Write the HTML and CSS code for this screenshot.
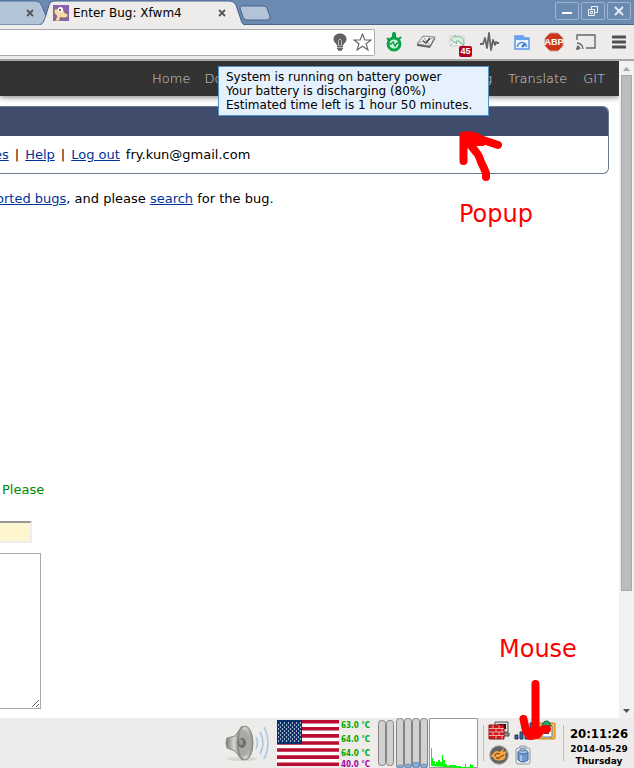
FILE: index.html
```html
<!DOCTYPE html>
<html lang="en">
<head>
<meta charset="utf-8">
<title>Enter Bug: Xfwm4</title>
<link rel="stylesheet" href="styles.css">
</head>
<body>
<header class="titlebar">
  <div class="tab tab-back">
    <svg class="tab-shape" viewBox="0 0 46 25" preserveAspectRatio="none" aria-hidden="true"><path d="M-2 1H36Q40 1 42 6L46 16V25H-2Z" fill="#b3c3d8" stroke="#45658f"/></svg>
    <button class="tab-close" aria-label="Close tab"><svg width="8" height="8" viewBox="0 0 8 8"><path d="M1 1L7 7M7 1L1 7" stroke="#555" stroke-width="1.8"/></svg></button>
  </div>
  <div class="tab tab-front">
    <svg class="tab-shape" viewBox="0 0 204 26" preserveAspectRatio="none" aria-hidden="true"><path d="M0 25C4 24 4 20 6 15L9 5Q10 1 14 1H190Q194 1 196 5L201 20Q202 24 204 25V27H0Z" fill="#edecea"/><path d="M0 24.500C4 23 4 20 6 15L9 5Q10 1 14 1H190Q194 1 196 5L201 20Q202 24 204 24.500" fill="none" stroke="#43628a"/></svg>
    <svg class="favicon" width="16" height="16" viewBox="0 0 16 16" aria-hidden="true"><path fill="#8963ad" d="M0 0h16v16H0z"/><path d="M1 6Q1 3 4 4Q6 1 9 3Q11 6 12 8Q15 8 15 10Q15 13 11 13L7 12.500V16H2L4 11Q1 9 1 6Z" fill="#f6d9a8" stroke="#75563c" stroke-width=".6"/><circle cx="7.500" cy="4.500" r="2.600" fill="#fff"/><circle cx="7" cy="5" r="1" fill="#333"/></svg>
    <span class="tab-title">Enter Bug: Xfwm4</span>
    <button class="tab-close" aria-label="Close tab"><svg width="8" height="8" viewBox="0 0 8 8"><path d="M1 1L7 7M7 1L1 7" stroke="#555" stroke-width="1.800"/></svg></button>
  </div>
  <button class="new-tab" aria-label="New tab"><svg width="33" height="16" viewBox="0 0 33 16"><path d="M3 1H24Q27 1 28 3L31 12Q31 15 28 15H8Q5 15 4 12L1 3Q1 1 3 1Z" fill="#b3c3d8" stroke="#48678f"/></svg></button>
  <div class="window-buttons">
    <button aria-label="Minimize"><svg width="12" height="12" viewBox="0 0 12 12"><path d="M1 7h10v2H1z" fill="#fff"/></svg></button>
    <button aria-label="Restore"><svg width="12" height="12" viewBox="0 0 12 12" fill="none" stroke="#f0f4f8"><path d="M4.500 4V1.500h6v6H8M1.500 4.500h6v6h-6zM3.500 6.500h2v2h-2z"/></svg></button>
    <button aria-label="Close"><svg width="12" height="12" viewBox="0 0 12 12"><path d="M2 2L10 10M10 2L2 10" stroke="#e8eef5" stroke-width="1.800"/></svg></button>
  </div>
</header>

<div class="toolbar">
  <div class="omnibox">
    <input type="text" aria-label="Address">
    <svg width="14" height="18" viewBox="0 0 14 18" aria-hidden="true"><path d="M7 .5C3 .5 .5 3 .5 6.500C.5 9 3 10 4 12.500H10C11 10 13.500 9 13.500 6.500C13.500 3 11 .5 7 .5Z" fill="#616161"/><path d="M5.500 12V7.500L7 6L8.500 7.500V12" fill="none" stroke="#bbb"/><path d="M4 13.500H10M4 15.500H10M5 17H9" stroke="#666" stroke-width="1.400"/></svg>
    <svg width="19" height="18" viewBox="0 0 19 18" aria-hidden="true"><path d="M9.500 1L11.800 7H18L13 10.700L15 17L9.500 13.200L4 17L6 10.700L1 7H7.200Z" fill="#fff" stroke="#666" stroke-width="1.100"/></svg>
  </div>
  <div class="extensions">
    <button aria-label="Timer"><svg width="20" height="20" viewBox="0 0 20 20"><path d="M10 2V5" stroke="#0aa345" stroke-width="4" stroke-linecap="round"/><path d="M3 6L5 8M17 5L14 8" stroke="#0aa345" stroke-width="2"/><circle cx="10" cy="12" r="6" fill="#d6f5df" stroke="#0aa345" stroke-width="2.800"/><path d="M5 12H7L9 10L11 14L13 11H15" fill="none" stroke="#0aa345" stroke-width="1.500"/></svg></button>
    <button aria-label="Mail"><svg width="20" height="20" viewBox="0 0 20 20"><path d="M7 4L19 5L14 14L1 12Z" fill="#eee" stroke="#888"/><path d="M1 12L14 14L19 5V7L14 16L1 14Z" fill="#666"/><path d="M7 4L10 9L19 5M1 12L8 8M11 9L14 14" fill="none" stroke="#999" stroke-width=".8"/><path d="M7 9L10 11L14 6" fill="none" stroke="#444" stroke-width="1.400"/></svg></button>
    <button class="with-badge" aria-label="Unread mail, 45"><svg width="20" height="20" viewBox="0 0 20 20"><path d="M2 4H16V14H2Z" fill="#f2f2ef" stroke="#ccc"/><path d="M2 14L8 8L16 14" fill="none" stroke="#c4c4c4"/><path d="M3 8L7 3V5Q16 3 16 11L15 14Q13 8 8 9L9 12Z" fill="#d9f0df" stroke="#7fb69b" stroke-width=".9"/></svg><span class="badge">45</span></button>
    <button aria-label="Activity"><svg width="20" height="20" viewBox="0 0 20 20"><path d="M0 12H3L5 6L7 16L9 1L11 18L13 8L15 13L16 10L17 11H19" fill="none" stroke="#666" stroke-width="1.800" stroke-linejoin="round"/></svg></button>
    <button aria-label="Speed"><svg width="20" height="20" viewBox="0 0 20 20"><path d="M3 4H11L12 6H17V17H3Z" fill="#e8f1fd" stroke="#5c98ea" stroke-width="1.500"/><path d="M3 4H11L12 6H17V8H3Z" fill="#6ba4ee"/><path d="M5.500 15A4.500 4.500 0 0 1 14.500 15" fill="none" stroke="#4687df" stroke-width="1.500"/><path d="M10 15L13 12" stroke="#356baf" stroke-width="2"/></svg></button>
    <button aria-label="Adblock Plus"><svg width="20" height="20" viewBox="0 0 20 20"><path d="M6 1H14L19 6V14L14 19H6L1 14V6Z" fill="#ce3519" stroke="#c9a49b"/><text x="10" y="13" text-anchor="middle" class="abp">ABP</text></svg></button>
    <button aria-label="Cast"><svg width="20" height="20" viewBox="0 0 20 20" fill="none" stroke="#666" stroke-width="1.400"><path d="M1 8V3H19V16H10M1 14A4 4 0 0 1 4 17M1 11A6 6 0 0 1 7 17"/><circle cx="1.500" cy="16.500" r=".8" fill="#666"/></svg></button>
  </div>
  <button class="menu" aria-label="Menu"><svg width="14" height="14" viewBox="0 0 14 14"><path d="M1 2H13M1 7H13M1 12H13" stroke="#505050" stroke-width="3" stroke-linecap="round"/></svg></button>
</div>

<div class="viewport">
  <main class="page">
    <nav class="site-nav">
      <a href="#">Home</a><a href="#" class="grow">Do</a><a href="#">g</a><a href="#">Translate</a><a href="#">GIT</a>
    </nav>
    <section class="card">
      <div class="card-head"></div>
      <div class="card-links"><a href="#">es</a><i>|</i><a href="#">Help</a><i>|</i><a href="#">Log out</a><span>fry.kun@gmail.com</span></div>
    </section>
    <p class="intro"><a href="#">orted bugs</a>, and please <a href="#">search</a> for the bug.</p>
    <form class="bug-form">
      <p class="hint">Please</p>
      <input class="summary" type="text" aria-label="Summary">
      <textarea class="description" aria-label="Description"></textarea>
    </form>
  </main>
  <div class="scrollbar" aria-hidden="true">
    <svg width="15" height="14" viewBox="0 0 15 14"><path d="M4 10L7.500 6L11 10Z" fill="#a3a3a3"/></svg>
    <div class="track"><div class="thumb"></div></div>
    <svg width="15" height="14" viewBox="0 0 15 14"><path d="M4 5L7.500 9L11 5Z" fill="#505050"/></svg>
  </div>
</div>

<footer class="panel">
  <svg class="speaker" width="44" height="40" viewBox="0 0 44 40" aria-hidden="true"><defs><linearGradient id="metal"><stop offset="0" stop-color="#777a73"/><stop offset=".5" stop-color="#d5d6d2"/><stop offset="1" stop-color="#8b8d87"/></linearGradient></defs><ellipse cx="17" cy="36" rx="15" ry="2" fill="#d8d7d4"/><path d="M2 15Q0 20 2 25L10 28L17 37V3L10 13Z" fill="url(#metal)" stroke="#898b85"/><ellipse cx="20" cy="20" rx="8" ry="17" fill="url(#metal)" stroke="#868881"/><ellipse cx="19" cy="20" rx="5.500" ry="13" fill="#a9aaa6"/><ellipse cx="17" cy="20" rx="4" ry="5" fill="#6d706a"/><ellipse cx="16" cy="19" rx="2" ry="3" fill="#969994"/><path d="M31 14Q34 20 31 26M35 9Q41 20 35 31M39 4Q47 20 39 36" fill="none" stroke="#a9c7e7" stroke-width="1.600"/></svg>
  <svg class="flag" width="62" height="46" viewBox="0 0 62 46" aria-label="English (US)"><defs><pattern id="stars" width="4" height="4" patternUnits="userSpaceOnUse"><circle cx="1.500" cy="1" r=".7" fill="#fff"/><circle cx="3.500" cy="3" r=".7" fill="#fff"/></pattern></defs><path fill="#fff" d="M0 0h62v46H0z"/><path d="M0 1.800H62M0 8.800H62M0 15.900H62M0 23H62M0 30H62M0 37.100H62M0 44.200H62" stroke="#b90d32" stroke-width="3.600"/><path fill="#08306b" d="M0 0h25v24H0z"/><path fill="url(#stars)" d="M1 2h23v20H1z"/></svg>
  <div class="temps"><span>63.0 °C</span><span>64.0 °C</span><span>64.0 °C</span><span class="hot">40.0 °C</span></div>
  <svg class="meters" width="51" height="50" viewBox="0 0 51 50" aria-hidden="true"><g fill="#d1d1d0" stroke="#858585"><rect x=".5" y="2.500" width="7" height="45" rx="3"/><rect x="8.500" y="2.500" width="7" height="45" rx="3"/><rect x="18.500" y=".5" width="7" height="50" rx="3"/><rect x="26.500" y=".5" width="7" height="50" rx="3"/><rect x="34.500" y=".5" width="7" height="50" rx="3"/><rect x="42.500" y=".5" width="7" height="50" rx="3"/></g><g fill="#86aee0" stroke="#587fae" stroke-width=".7"><ellipse cx="22" cy="48.500" rx="3" ry="1.500"/><ellipse cx="30" cy="48" rx="3" ry="2"/><ellipse cx="38" cy="47" rx="3.300" ry="3"/><ellipse cx="46" cy="48" rx="3" ry="2"/></g></svg>
  <svg class="graph" width="50" height="50" viewBox="0 0 50 50" aria-hidden="true"><path fill="#fff" stroke="#999" d="M.5.500h48v49H.5z"/><path fill="#0f0" d="M2 48V30h1v10h1v3h2v3h1v-2h2v-2h2v2h2v-7h1v5h2v4h2v2h2v-1h7v1h5v1h4v-3h1v3h4v-3h1v1h2v4Z"/></svg>
  <span class="separator"></span>
  <div class="tray">
    <svg width="22" height="22" viewBox="0 0 22 22" aria-hidden="true"><path d="M7 2H20V12H7Z" fill="#ddd" stroke="#555"/><path d="M10 4H18V9H10Z" fill="#111"/><path d="M15 13H21V16H15Z" fill="#999" stroke="#444"/><path d="M1 5H16V19H1Z" fill="#d1161c" stroke="#8c1519"/><path d="M1 8.500H16M1 12H16M1 15.500H16M5 5V8M11 5V8M8 9V12M14 9V12M5 12V15M11 12V15M8 16V19M14 16V19" stroke="#f5b5b5" stroke-width=".9"/></svg>
    <svg width="22" height="22" viewBox="0 0 22 22" aria-hidden="true"><path d="M3 15H6V19H3ZM8 12H11V19H8ZM13 8H16V19H13ZM18 3H21V19H18Z" fill="#3b639d" stroke="#22385e"/></svg>
    <svg width="22" height="22" viewBox="0 0 22 22" aria-hidden="true"><rect x="2" y="3" width="17" height="16" rx="1" fill="#f7bd49" stroke="#c57f15"/><path d="M5 6H16V17H5Z" fill="#fff" stroke="#527faf"/><path d="M6 6Q7 1 10.500 1T15 6Z" fill="#22a36c" stroke="#126342"/><path d="M8 9H13V14H8Z" fill="#36445e"/></svg>
    <svg width="22" height="22" viewBox="0 0 22 22" aria-hidden="true"><circle cx="11" cy="11" r="9.300" fill="#646464" stroke="#aaa"/><path d="M2 12L5 10Q7 5 12 8L16 4L15 8L20 7L17 10Q19 15 14 16Q7 18 5 13Z" fill="#f6a64d"/><path d="M7 12Q8 8 12 10M12 13L16 11M8 14H12" fill="none" stroke="#8b4b12" stroke-width="1.300"/></svg>
    <svg width="22" height="22" viewBox="0 0 22 22" aria-hidden="true"><path d="M8 2H14V4H16Q18 4 18 6V18Q18 20 16 20H6Q4 20 4 18V6Q4 4 6 4H8Z" fill="#e9edf1" stroke="#8a98a6"/><path d="M6 8V16Q11 20 16 16V8Z" fill="#7299cb" stroke="#3f6799"/><ellipse cx="11" cy="8" rx="5" ry="2" fill="#a4c3e9" stroke="#3f6799"/><path d="M9 4H13V7H9Z" fill="#aabed6" stroke="#526d8c" stroke-width=".7"/><path d="M9 11V17" stroke="#a5c4e9" stroke-width="2"/></svg>
  </div>
  <span class="separator"></span>
  <div class="clock"><time>20:11:26</time><span>2014-05-29</span><span>Thursday</span></div>
</footer>

<div class="tooltip" role="tooltip">System is running on battery power<br>Your battery is discharging (80%)<br>Estimated time left is 1 hour 50 minutes.</div>
<div class="note note-popup">
  <svg width="50" height="60" viewBox="0 0 50 60" aria-hidden="true"><path d="M27 49V45Q25 40 22 34Q20 27 17 24L10 15M4.500 33V7.500Q14 6 21 11L39 17M6 8L15 14L23 14" fill="none" stroke="red" stroke-width="8" stroke-linecap="round" stroke-linejoin="round"/></svg>
  <span>Popup</span>
</div>
<div class="note note-mouse">
  <span>Mouse</span>
  <svg width="40" height="68" viewBox="0 0 40 68" aria-hidden="true"><path d="M20.500 7V53M8.500 42L11 54L15 59L22 58L27 53L32 52M14 54L20 56" fill="none" stroke="red" stroke-width="8" stroke-linecap="round" stroke-linejoin="round"/></svg>
</div>
</body>
</html>
```

FILE: styles.css
```css
* { box-sizing: border-box; }
body {
  margin: 0;
  min-height: 100vh;
  display: flex;
  flex-direction: column;
  position: relative;
  overflow: hidden;
  background: #fff;
  color: #000;
  font: 13px/16px "DejaVu Sans", sans-serif;
}
svg { display: block; flex: none; }
button { border: 0; padding: 0; background: none; display: grid; place-items: center; }

/* Window title bar */
.titlebar { display: flex; height: 25px; background: #6b8ab1; border-bottom: 1px solid #48678f; }
.tab { position: relative; display: flex; align-items: center; height: 25px; }
.tab > * { position: relative; }
.tab > .tab-shape { position: absolute; left: 0; top: 0; width: 100%; height: 100%; }
.tab-back { width: 46px; padding-left: 26px; }
.tab-front { width: 204px; margin-left: -6px; padding: 0 18px 0 13px; gap: 4px; z-index: 1; }
.tab-front > .tab-shape { height: 26px; }
.tab-title { flex: 1; font-size: 12px; white-space: nowrap; }
.tab-close { width: 8px; height: 16px; }
.new-tab { height: 26px; margin-left: -5px; }
.window-buttons { display: flex; gap: 2px; margin: 2px 3px 0 auto; }
.window-buttons button { width: 24px; height: 18px; border: 1px solid #9db3ce; border-radius: 2px; }

/* Toolbar */
.toolbar { display: flex; align-items: center; height: 36px; padding-right: 8px; background: #edecea; border-bottom: 2px solid #a5a5a5; }
.omnibox { flex: 1; display: flex; align-items: center; gap: 6px; height: 27px; padding-right: 2px; background: #fff; border: 1px solid #aaa; border-left: 0; border-radius: 0 2px 2px 0; }
.omnibox input { flex: 1; min-width: 0; border: 0; background: none; }
.extensions { display: flex; gap: 12px; margin-left: 9px; }
.extensions button { width: 20px; height: 20px; }
.with-badge { position: relative; }
.badge { position: absolute; left: 11px; top: 14px; width: 13px; height: 11px; background: #b6001d; border-radius: 2px; color: #fff; font: bold 9px/11px "Liberation Sans", sans-serif; text-align: center; }
.abp { font: bold 9px "Liberation Sans", sans-serif; fill: #fff; }
.menu { margin-left: 16px; }

/* Page */
.viewport { flex: 1; display: flex; }
.page { flex: 1; min-width: 0; overflow: hidden; }
.site-nav { display: flex; gap: 16px; height: 35px; padding: 0 14px 0 152px; align-items: center; background: #333; box-shadow: 0 1px 6px #777; font-weight: 200; }
.site-nav a { color: #d4d4d4; text-decoration: none; }
.site-nav .grow { flex: 1; margin-left: -2px; }
.card { margin: 10px 10px 0 0; border: 1px solid #6e7b94; border-left: 0; border-radius: 0 6px 6px 0; overflow: hidden; }
.card-head { height: 29px; background: #404d6c; }
.card-links { height: 37px; padding-top: 11px; margin-left: -6px; white-space: nowrap; }
.card-links a, .intro a { color: #039; }
.card-links i { font-style: normal; margin: 0 6px; }
.card-links span { margin-left: 6px; }
.intro { margin: 17px 0 0 -4px; white-space: nowrap; }
.bug-form { display: flex; flex-direction: column; align-items: flex-start; margin-top: 275px; }
.hint { margin: 0 0 0 2px; color: #080; }
.summary { width: 32px; height: 22px; margin-top: 23px; background: #fff6d0; border: 2px solid #eee; border-top-color: #999; border-left: 0; }
.description { width: 41px; height: 156px; margin-top: 10px; background: #fff; border: 1px solid #a9a9a9; border-left: 0; }

.scrollbar { width: 15px; display: flex; flex-direction: column; background: #f1f1f1; }
.track { flex: 1; padding: 0 2px; }
.thumb { height: 82%; background: #bcbcbc; border: 1px solid #a8a8a8; }

/* Desktop panel */
.panel { display: flex; align-items: center; justify-content: flex-end; height: 50px; padding-right: 4px; background: #edecea; }
.flag { margin-left: 8px; }
.temps { width: 33px; margin: 2px 4px 0 2px; font: bold 8px/14px "DejaVu Sans Condensed", "DejaVu Sans", sans-serif; color: #00a800; white-space: nowrap; height: 50px; }
.temps span { display: block; }
.temps .hot { color: #a800a8; line-height: 8px; }
.separator { width: 1px; height: 36px; margin: 0 4px; background: #bbb; }
.tray { display: grid; grid-template-columns: repeat(3, 22px); gap: 2px 2px; margin-right: 1px; }
.clock { display: flex; flex-direction: column; align-items: center; width: 62px; padding-top: 6px; font: bold 9px/12px "DejaVu Sans", sans-serif; white-space: nowrap; }
.clock time { font: bold 13px/18px "DejaVu Sans Condensed", "DejaVu Sans", sans-serif; }

/* Overlays */
.tooltip { position: absolute; left: 218px; top: 66px; padding: 3px 16px 3px 7px; border: 1px solid #5294c8; background: #e5f2fd; font-size: 12px; line-height: 14px; white-space: nowrap; z-index: 2; }
.note { position: absolute; z-index: 3; color: red; font-size: 24px; line-height: 28px; }
.note-popup { left: 459px; top: 128px; }
.note-popup span { display: block; margin-top: 12px; }
.note-mouse { left: 499px; top: 635px; }
.note-mouse svg { margin: 14px 0 0 16px; }
```
